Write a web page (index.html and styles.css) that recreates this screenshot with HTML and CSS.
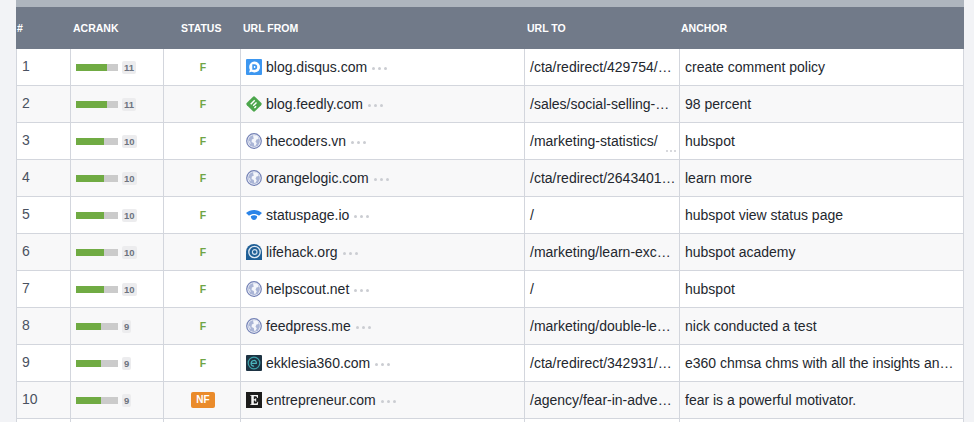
FILE: index.html
```html
<!DOCTYPE html>
<html lang="en">
<head>
<meta charset="utf-8">
<title>Backlinks</title>
<link rel="stylesheet" href="styles.css">
</head>
<body>
<svg class="defs" width="0" height="0" aria-hidden="true">
  <symbol id="globe" viewBox="0 0 16 16">
    <circle cx="8" cy="8" r="7.300" fill="#f1f3f9" stroke="#7482b6" stroke-width="1.200"/>
    <circle cx="8" cy="8" r="5.900" fill="#aab5d6"/>
    <path d="M7 2.300c1.800-.3 3.600.1 5 1.200l.6 2.500-2.100.4-1 2.300 1.300 1.500-1.300 2.600-1.200.3-.5-3-2.200-1.200.2-2.300 1.900-.9z" fill="#f4f6fb"/>
    <path d="M2.400 7.500l1.700.9.800 2.700-1.300-.7z" fill="#e4e8f3"/>
  </symbol>
</svg>
<main class="panel">
<table class="links">
<thead>
<tr><th class="c-n">#</th><th class="c-r">ACRANK</th><th class="c-s">STATUS</th><th class="c-f">URL FROM</th><th class="c-t">URL TO</th><th class="c-a">ANCHOR</th></tr>
</thead>
<tbody>
<tr><td>1</td><td><div class="rank"><span class="bar"><i class="fill w11"></i></span><b class="num">11</b></div></td><td class="st">F</td>
<td><div class="from"><svg class="ico" viewBox="0 0 16 16"><rect width="16" height="16" rx="1" fill="#3d97f0"/><path d="M8.500 2.500a5.500 5.500 0 1 1-2.700 10.300L3 13.500l.9-2.800A5.500 5.500 0 0 1 8.500 2.500z" fill="#fff"/><path d="M6.300 5.300h2.200a2.700 2.700 0 0 1 0 5.400H6.300z" fill="#3d97f0"/><path d="M7.900 6.900h.5a1.100 1.100 0 0 1 0 2.200h-.5z" fill="#fff"/></svg><span>blog.disqus.com</span><em class="dots"><u></u><u></u><u></u></em></div></td>
<td><div class="to">/cta/redirect/429754/…</div></td><td><div class="anc">create comment policy</div></td></tr>

<tr><td>2</td><td><div class="rank"><span class="bar"><i class="fill w11"></i></span><b class="num">11</b></div></td><td class="st">F</td>
<td><div class="from"><svg class="ico" viewBox="0 0 16 16"><path d="M6.800.9a1.700 1.700 0 0 1 2.400 0l5.900 5.900a1.700 1.700 0 0 1 0 2.400l-5.900 5.900a1.700 1.700 0 0 1-2.400 0L.9 9.200a1.700 1.700 0 0 1 0-2.400z" fill="#4ca64c"/><path d="M8.200 3.800l1 1-4 4-1-1zM10 6l1 1-3.300 3.300-1-1zM9.600 9.700l1 1-1.700 1.700-1-1z" fill="#fff"/></svg><span>blog.feedly.com</span><em class="dots"><u></u><u></u><u></u></em></div></td>
<td><div class="to">/sales/social-selling-…</div></td><td><div class="anc">98 percent</div></td></tr>

<tr><td>3</td><td><div class="rank"><span class="bar"><i class="fill w10"></i></span><b class="num">10</b></div></td><td class="st">F</td>
<td><div class="from"><svg class="ico"><use href="#globe"/></svg><span>thecoders.vn</span><em class="dots"><u></u><u></u><u></u></em></div></td>
<td><div class="to">/marketing-statistics/<em class="low"><u></u><u></u><u></u></em></div></td><td><div class="anc">hubspot</div></td></tr>

<tr><td>4</td><td><div class="rank"><span class="bar"><i class="fill w10"></i></span><b class="num">10</b></div></td><td class="st">F</td>
<td><div class="from"><svg class="ico"><use href="#globe"/></svg><span>orangelogic.com</span><em class="dots"><u></u><u></u><u></u></em></div></td>
<td><div class="to">/cta/redirect/2643401…</div></td><td><div class="anc">learn more</div></td></tr>

<tr><td>5</td><td><div class="rank"><span class="bar"><i class="fill w10"></i></span><b class="num">10</b></div></td><td class="st">F</td>
<td><div class="from"><svg class="ico" viewBox="0 0 16 16"><path d="M0 6C4.500 2 11.500 2 16 6L13 8.800C10 6.500 6 6.500 3 8.800z" fill="#2a84e8"/><path d="M4.800 9.300C6.500 7.900 9.500 7.900 11.200 9.300C11.200 11.500 9.600 13 8 13C6.400 13 4.800 11.500 4.800 9.300z" fill="#2a84e8"/></svg><span>statuspage.io</span><em class="dots"><u></u><u></u><u></u></em></div></td>
<td><div class="to">/</div></td><td><div class="anc">hubspot view status page</div></td></tr>

<tr><td>6</td><td><div class="rank"><span class="bar"><i class="fill w10"></i></span><b class="num">10</b></div></td><td class="st">F</td>
<td><div class="from"><svg class="ico" viewBox="0 0 16 16"><path d="M8 0a8 8 0 0 1 8 8v8H8A8 8 0 0 1 8 0z" fill="#1f5f96"/><path d="M0 9v7h9z" fill="#1f5f96"/><circle cx="8.500" cy="8" r="5.700" fill="none" stroke="#dfe9f2" stroke-width="1.300"/><circle cx="8.700" cy="8" r="2.300" fill="none" stroke="#cfdfee" stroke-width="1.200"/></svg><span>lifehack.org</span><em class="dots"><u></u><u></u><u></u></em></div></td>
<td><div class="to">/marketing/learn-exc…</div></td><td><div class="anc">hubspot academy</div></td></tr>

<tr><td>7</td><td><div class="rank"><span class="bar"><i class="fill w10"></i></span><b class="num">10</b></div></td><td class="st">F</td>
<td><div class="from"><svg class="ico"><use href="#globe"/></svg><span>helpscout.net</span><em class="dots"><u></u><u></u><u></u></em></div></td>
<td><div class="to">/</div></td><td><div class="anc">hubspot</div></td></tr>

<tr><td>8</td><td><div class="rank"><span class="bar"><i class="fill w9"></i></span><b class="num">9</b></div></td><td class="st">F</td>
<td><div class="from"><svg class="ico"><use href="#globe"/></svg><span>feedpress.me</span><em class="dots"><u></u><u></u><u></u></em></div></td>
<td><div class="to">/marketing/double-le…</div></td><td><div class="anc">nick conducted a test</div></td></tr>

<tr><td>9</td><td><div class="rank"><span class="bar"><i class="fill w9"></i></span><b class="num">9</b></div></td><td class="st">F</td>
<td><div class="from"><svg class="ico" viewBox="0 0 16 16"><rect width="16" height="16" rx="1" fill="#1d3343"/><circle cx="8" cy="8" r="5.800" fill="none" stroke="#3fa3ab" stroke-width="1.200"/><path d="M5 8.300h5.300c.3-1.800-1-3-2.500-2.800-1.700.2-2.700 1.500-2.700 3 0 1.700 1.300 2.800 3 2.600" fill="none" stroke="#4cb5bd" stroke-width="1.200"/></svg><span>ekklesia360.com</span><em class="dots"><u></u><u></u><u></u></em></div></td>
<td><div class="to">/cta/redirect/342931/…</div></td><td><div class="anc">e360 chmsa chms with all the insights an…</div></td></tr>

<tr><td>10</td><td><div class="rank"><span class="bar"><i class="fill w9"></i></span><b class="num">9</b></div></td><td class="st"><span class="nf">NF</span></td>
<td><div class="from"><svg class="ico" viewBox="0 0 16 16"><rect width="16" height="16" fill="#1c1c1c"/><path d="M4 3h8v3h-.7c-.2-1.200-.8-1.700-2-1.700H7.800v3h.6c.8 0 1.100-.4 1.200-1.200h.6v3.800h-.6c-.1-.9-.4-1.300-1.200-1.300h-.6v3h1.500c1.300 0 2-.6 2.200-1.900h.7L11.800 13H4v-.6h1.300V3.600H4z" fill="#f4f4f4"/></svg><span>entrepreneur.com</span><em class="dots"><u></u><u></u><u></u></em></div></td>
<td><div class="to">/agency/fear-in-adve…</div></td><td><div class="anc">fear is a powerful motivator.</div></td></tr>

<tr class="tail"><td></td><td></td><td></td><td></td><td></td><td></td></tr>
</tbody>
</table>
</main>
</body>
</html>
```

FILE: styles.css
```css
html, body {
  margin: 0;
  height: 422px;
  overflow: hidden;
  background: #f2f3f6;
}
.defs { position: absolute; }
.panel {
  box-sizing: border-box;
  width: 948px;
  height: 422px;
  overflow: hidden;
  margin-left: 16px;
  padding-top: 7px;
  background: linear-gradient(#aeb5be 7px, transparent 7px);
}
.links {
  width: 948px;
  table-layout: fixed;
  border-collapse: separate;
  border-spacing: 0;
  background: #fff;
  font-family: "Liberation Sans", Arial, sans-serif;
  font-size: 14px;
  color: #23272e;
}
thead tr { height: 42px; background: #717a89; }
th {
  padding: 0;
  font-size: 10.500px;
  font-weight: 700;
  color: #fff;
  text-align: left;
  vertical-align: middle;
}
.c-n { width: 55px; padding-left: 1px; box-sizing: border-box; }
.c-r { width: 93px; padding-left: 2px; box-sizing: border-box; }
.c-s { width: 77px; padding-left: 17px; box-sizing: border-box; }
.c-f { width: 284px; padding-left: 2px; box-sizing: border-box; }
.c-t { width: 155px; padding-left: 2px; box-sizing: border-box; }
.c-a { padding-left: 1px; box-sizing: border-box; }
tbody tr { height: 37px; }
tbody tr:nth-child(even) { background: #f8f8f9; }
td {
  padding: 0 0 0 5px;
  box-sizing: border-box;
  height: 37px;
  border-bottom: 1px solid #d3d6dd;
  border-right: 1px solid #d3d6dd;
  vertical-align: middle;
  white-space: nowrap;
  overflow: hidden;
}
td:first-child { border-left: 1px solid #d3d6dd; color: #4a5160; padding-bottom: 2px; }
.rank { display: flex; align-items: center; gap: 4px; }
.bar { display: block; width: 42px; height: 7px; background: #cbcbcb; }
.fill { display: block; height: 100%; background: #70ab43; }
.w11 { width: 31px; }
.w10 { width: 28px; }
.w9 { width: 25px; }
.num {
  min-width: 5px;
  padding: 0 2px;
  height: 13px;
  margin-top: 1px;
  border-radius: 2px;
  background: #ececee;
  color: #6d7480;
  font-size: 9.500px;
  line-height: 13px;
  text-align: center;
}
.st {
  padding-left: 2px;
  text-align: center;
  font-size: 10.500px;
  font-weight: 700;
  color: #70a545;
}
.nf {
  display: inline-block;
  width: 24px;
  height: 16px;
  border-radius: 2px;
  background: #ea8b2b;
  color: #fff;
  font-size: 10px;
  line-height: 16px;
}
.from { display: flex; align-items: center; }
.ico { width: 16px; height: 16px; flex: none; margin-right: 4px; }
.dots { display: inline-flex; gap: 3px; margin-left: 5px; margin-top: 2px; }
.dots u, .low u { display: block; width: 3px; height: 3px; border-radius: 50%; background: #cbcdd2; }
.to { position: relative; height: 17px; line-height: 17px; }
.low { position: absolute; right: 3px; bottom: -2px; display: flex; gap: 2px; }
.low u { width: 2px; height: 2px; }
.anc { line-height: 17px; }
```
